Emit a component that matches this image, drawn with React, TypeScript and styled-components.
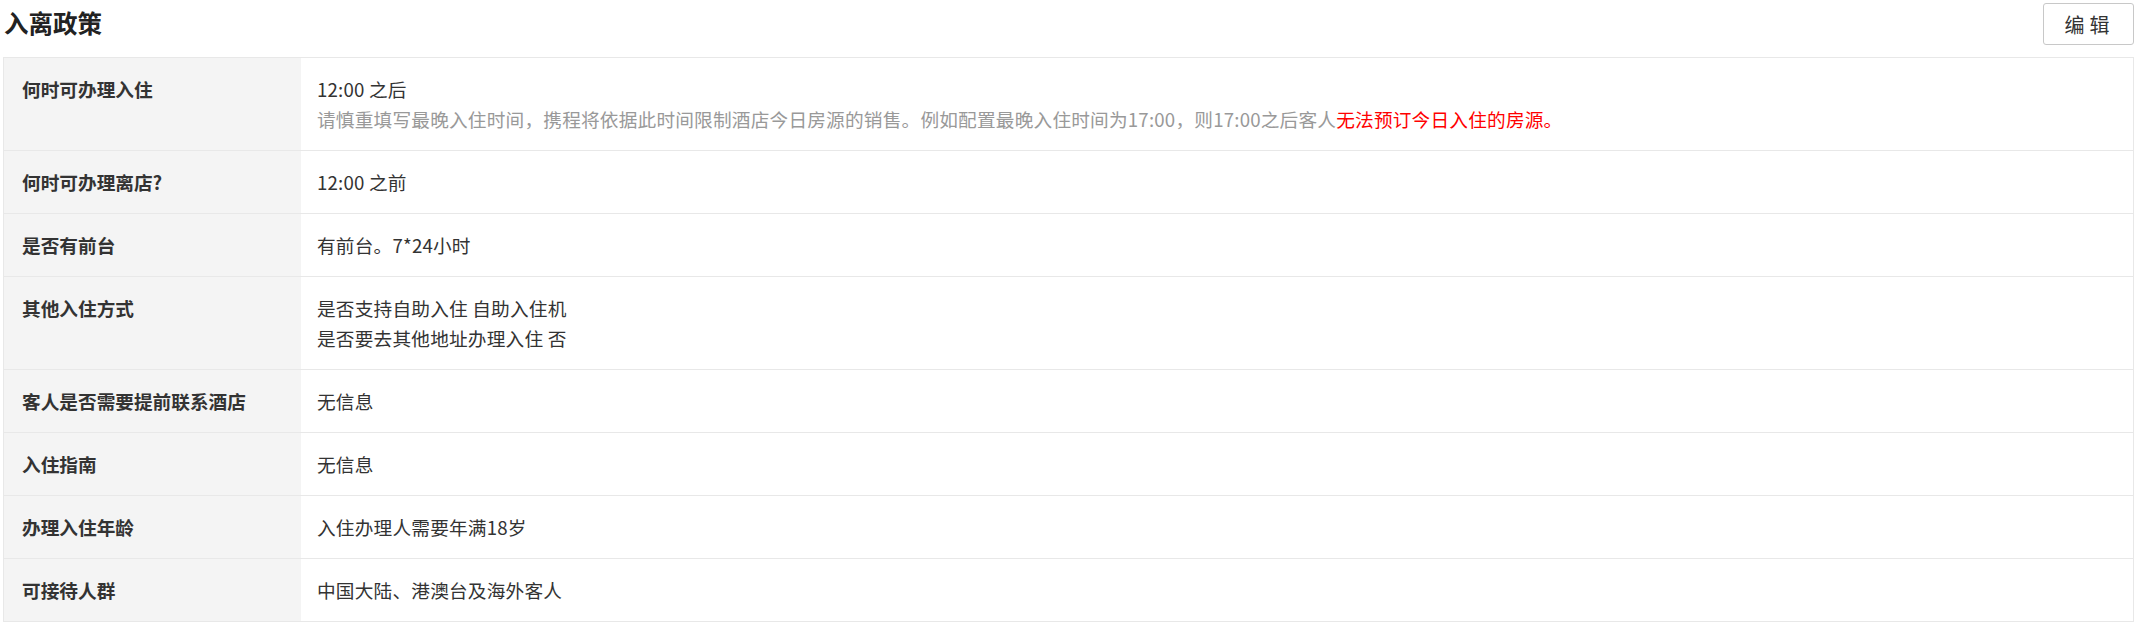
import React from "react";
import styled, { createGlobalStyle } from "styled-components";

const Global = createGlobalStyle`
  html, body { margin: 0; padding: 0; background: #fff; }
  body { font-family: "Noto Sans CJK SC", "Noto Sans", sans-serif; color: #333; }
`;

const Page = styled.div`
  margin: 0 6px 0 3px;
`;

const Header = styled.div`
  display: flex;
  align-items: center;
  justify-content: space-between;
  height: 46px;
  margin-bottom: 11px;
`;

const Title = styled.h2`
  margin: 0 0 0 1px;
  font-size: 24.5px;
  font-weight: 700;
  color: #222;
  line-height: 1;
`;

const EditButton = styled.button`
  width: 91px;
  height: 42px;
  margin-top: 2px;
  border: 1px solid #c8c8c8;
  border-radius: 3px;
  background: #fff;
  color: #333;
  font-family: inherit;
  font-size: 20px;
  letter-spacing: 5px;
  padding-left: 8px;
  cursor: pointer;
`;

const Table = styled.div`
  border: 1px solid #e8e8e8;
  border-bottom: none;
`;

const Row = styled.div`
  display: grid;
  grid-template-columns: 297px 1fr;
  border-bottom: 1px solid #e8e8e8;
`;

const Label = styled.div`
  background: #f4f4f4;
  padding: 16px 18px;
  font-size: 18.67px;
  line-height: 30px;
  font-weight: 700;
  color: #333;
`;

const Value = styled.div`
  padding: 16px 16px;
  font-size: 18.67px;
  line-height: 30px;
  letter-spacing: 0.2px;
  color: #333;
`;

const Line = styled.div<{ $tone?: "hint" }>`
  color: ${(p) => (p.$tone === "hint" ? "#999" : "#333")};
`;

const Warn = styled.span`
  color: #ff0000;
`;

const rows: { label: string; lines: React.ReactNode[] }[] = [
  {
    label: "何时可办理入住",
    lines: [
      "12:00 之后",
      <Line key="h" $tone="hint">
        请慎重填写最晚入住时间，携程将依据此时间限制酒店今日房源的销售。例如配置最晚入住时间为17:00，则17:00之后客人
        <Warn>无法预订今日入住的房源。</Warn>
      </Line>,
    ],
  },
  { label: "何时可办理离店?", lines: ["12:00 之前"] },
  { label: "是否有前台", lines: ["有前台。7*24小时"] },
  { label: "其他入住方式", lines: ["是否支持自助入住 自助入住机", "是否要去其他地址办理入住 否"] },
  { label: "客人是否需要提前联系酒店", lines: ["无信息"] },
  { label: "入住指南", lines: ["无信息"] },
  { label: "办理入住年龄", lines: ["入住办理人需要年满18岁"] },
  { label: "可接待人群", lines: ["中国大陆、港澳台及海外客人"] },
];

export default function App() {
  return (
    <Page>
      <Global />
      <Header>
        <Title>入离政策</Title>
        <EditButton>编辑</EditButton>
      </Header>
      <Table>
        {rows.map((r) => (
          <Row key={r.label}>
            <Label>{r.label}</Label>
            <Value>
              {r.lines.map((l, i) =>
                typeof l === "string" ? <Line key={i}>{l}</Line> : l
              )}
            </Value>
          </Row>
        ))}
      </Table>
    </Page>
  );
}
